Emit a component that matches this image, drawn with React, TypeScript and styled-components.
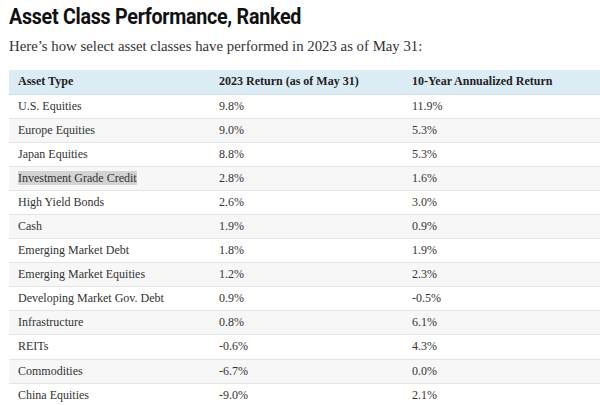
import React from "react";
import styled, { createGlobalStyle } from "styled-components";

const Global = createGlobalStyle`
  html, body { margin: 0; padding: 0; background: #fff; }
  body { width: 600px; height: 405px; overflow: hidden; }
`;

const Page = styled.div`
  padding: 3px 0 0 9px;
  display: flex;
  flex-direction: column;
`;

const Title = styled.h1`
  margin: 0;
  font-family: "Roboto", "Liberation Sans", sans-serif;
  font-weight: 700;
  font-size: 21.5px;
  line-height: 27px;
  letter-spacing: -0.3px;
  color: #111;
  transform: scaleX(0.915);
  transform-origin: left center;
  white-space: nowrap;
`;

const Intro = styled.p`
  margin: 5px 0 0 0;
  font-family: "Liberation Serif", serif;
  font-size: 14.8px;
  line-height: 22px;
  color: #333;
`;

const Table = styled.table`
  margin-top: 13px;
  width: 591px;
  border-collapse: collapse;
  table-layout: fixed;
  font-family: "Liberation Serif", serif;
  font-size: 12px;
  color: #333;
`;

const HeadCell = styled.th<{ $w: number }>`
  box-sizing: border-box;
  width: ${(p) => p.$w}px;
  text-align: left;
  font-weight: 700;
  background: #dcecf5;
  color: #222;
  padding: 0 9px;
  height: 24px;
  border-bottom: 1px solid #cfe0ea;
  white-space: nowrap;
`;

const Row = styled.tr<{ $alt: boolean }>`
  background: ${(p) => (p.$alt ? "#f7f7f7" : "#ffffff")};
  border-bottom: 1px solid #e4e4e4;
`;

const Cell = styled.td`
  padding: 0 9px;
  height: 23.1px;
  white-space: nowrap;
`;

const Mark = styled.span`
  background: #d3d3d3;
`;

const rows: [string, string, string][] = [
  ["U.S. Equities", "9.8%", "11.9%"],
  ["Europe Equities", "9.0%", "5.3%"],
  ["Japan Equities", "8.8%", "5.3%"],
  ["Investment Grade Credit", "2.8%", "1.6%"],
  ["High Yield Bonds", "2.6%", "3.0%"],
  ["Cash", "1.9%", "0.9%"],
  ["Emerging Market Debt", "1.8%", "1.9%"],
  ["Emerging Market Equities", "1.2%", "2.3%"],
  ["Developing Market Gov. Debt", "0.9%", "-0.5%"],
  ["Infrastructure", "0.8%", "6.1%"],
  ["REITs", "-0.6%", "4.3%"],
  ["Commodities", "-6.7%", "0.0%"],
  ["China Equities", "-9.0%", "2.1%"],
];

export default function App() {
  return (
    <>
      <Global />
      <Page>
        <Title>Asset Class Performance, Ranked</Title>
        <Intro>Here’s how select asset classes have performed in 2023 as of May 31:</Intro>
        <Table>
          <thead>
            <tr>
              <HeadCell $w={201}>Asset Type</HeadCell>
              <HeadCell $w={193}>2023 Return (as of May 31)</HeadCell>
              <HeadCell $w={197}>10-Year Annualized Return</HeadCell>
            </tr>
          </thead>
          <tbody>
            {rows.map((r, i) => (
              <Row key={r[0]} $alt={i % 2 === 1}>
                <Cell>{i === 3 ? <Mark>{r[0]}</Mark> : r[0]}</Cell>
                <Cell>{r[1]}</Cell>
                <Cell>{r[2]}</Cell>
              </Row>
            ))}
          </tbody>
        </Table>
      </Page>
    </>
  );
}
